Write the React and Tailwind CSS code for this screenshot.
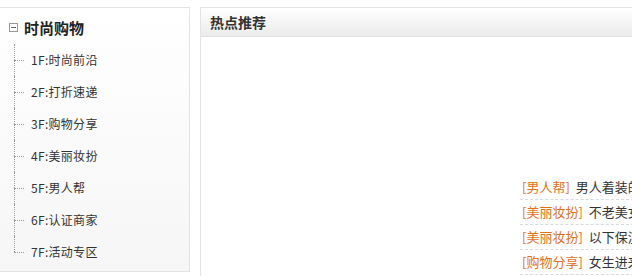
const floors = [
  "1F:时尚前沿",
  "2F:打折速递",
  "3F:购物分享",
  "4F:美丽妆扮",
  "5F:男人帮",
  "6F:认证商家",
  "7F:活动专区",
];

const hotList = [
  { tag: "[男人帮]", title: "男人着装的十大禁忌，你中招了吗" },
  { tag: "[美丽妆扮]", title: "不老美女的保养秘诀大公开" },
  { tag: "[美丽妆扮]", title: "以下保湿面膜让你水润一整天" },
  { tag: "[购物分享]", title: "女生进来看看我的淘宝战利品" },
];

const font = { fontFamily: '"Noto Sans CJK SC", "DejaVu Sans", sans-serif' };

export default function App() {
  return (
    <div
      className="flex h-[276px] w-[632px] overflow-hidden bg-white pt-[7px] text-[#333]"
      style={font}
    >
      {/* left tree menu */}
      <div className="h-[265px] w-[190px] shrink-0 border-y border-r border-[#e3e3e3] bg-gradient-to-b from-white to-[#f6f6f6]">
        <div className="box-content flex h-[30px] items-center pl-[9px] pt-[4px]">
          <span className="flex h-[9px] w-[9px] items-center justify-center border border-[#999] bg-white">
            <span className="h-px w-[5px] bg-[#666]" />
          </span>
          <span className="ml-[6px] text-[15px] font-bold leading-none text-[#222]">时尚购物</span>
        </div>
        <ul className="mt-[2px]">
          {floors.map((name, i) => (
            <li key={name} className="flex h-[32px] items-center">
              <div className="relative ml-[14px] h-full w-[17px] self-stretch">
                <span
                  className={`absolute left-0 top-0 border-l border-dotted border-[#999] ${
                    i === floors.length - 1 ? "h-1/2" : "h-full"
                  }`}
                />
                <span className="absolute left-0 top-1/2 w-[10px] border-t border-dotted border-[#999]" />
              </div>
              <span className="text-[12px] leading-none tracking-[0.3px]">{name}</span>
            </li>
          ))}
        </ul>
      </div>

      {/* hot recommendations */}
      <div className="ml-[10px] flex w-[480px] shrink-0 flex-col border-l border-t border-[#e3e3e3]">
        <div className="flex h-[29px] items-center border-b border-[#e0e0e0] bg-gradient-to-b from-white to-[#ebebeb] pl-[9px]">
          <span className="text-[14px] font-bold text-[#333]">热点推荐</span>
        </div>
        <div className="flex flex-1">
          <div className="w-[319px] shrink-0" />
          <ul className="mt-[138px] w-[200px] shrink-0">
            {hotList.map((item, i) => (
              <li
                key={i}
                className="flex h-[25px] items-center whitespace-nowrap border-b border-dashed border-[#d3dae0] pl-[2px] text-[13px]"
              >
                <span className="text-[#e0701e]">{item.tag}</span>
                <span className="ml-[6px] text-[#333]">{item.title}</span>
              </li>
            ))}
          </ul>
        </div>
      </div>
    </div>
  );
}
